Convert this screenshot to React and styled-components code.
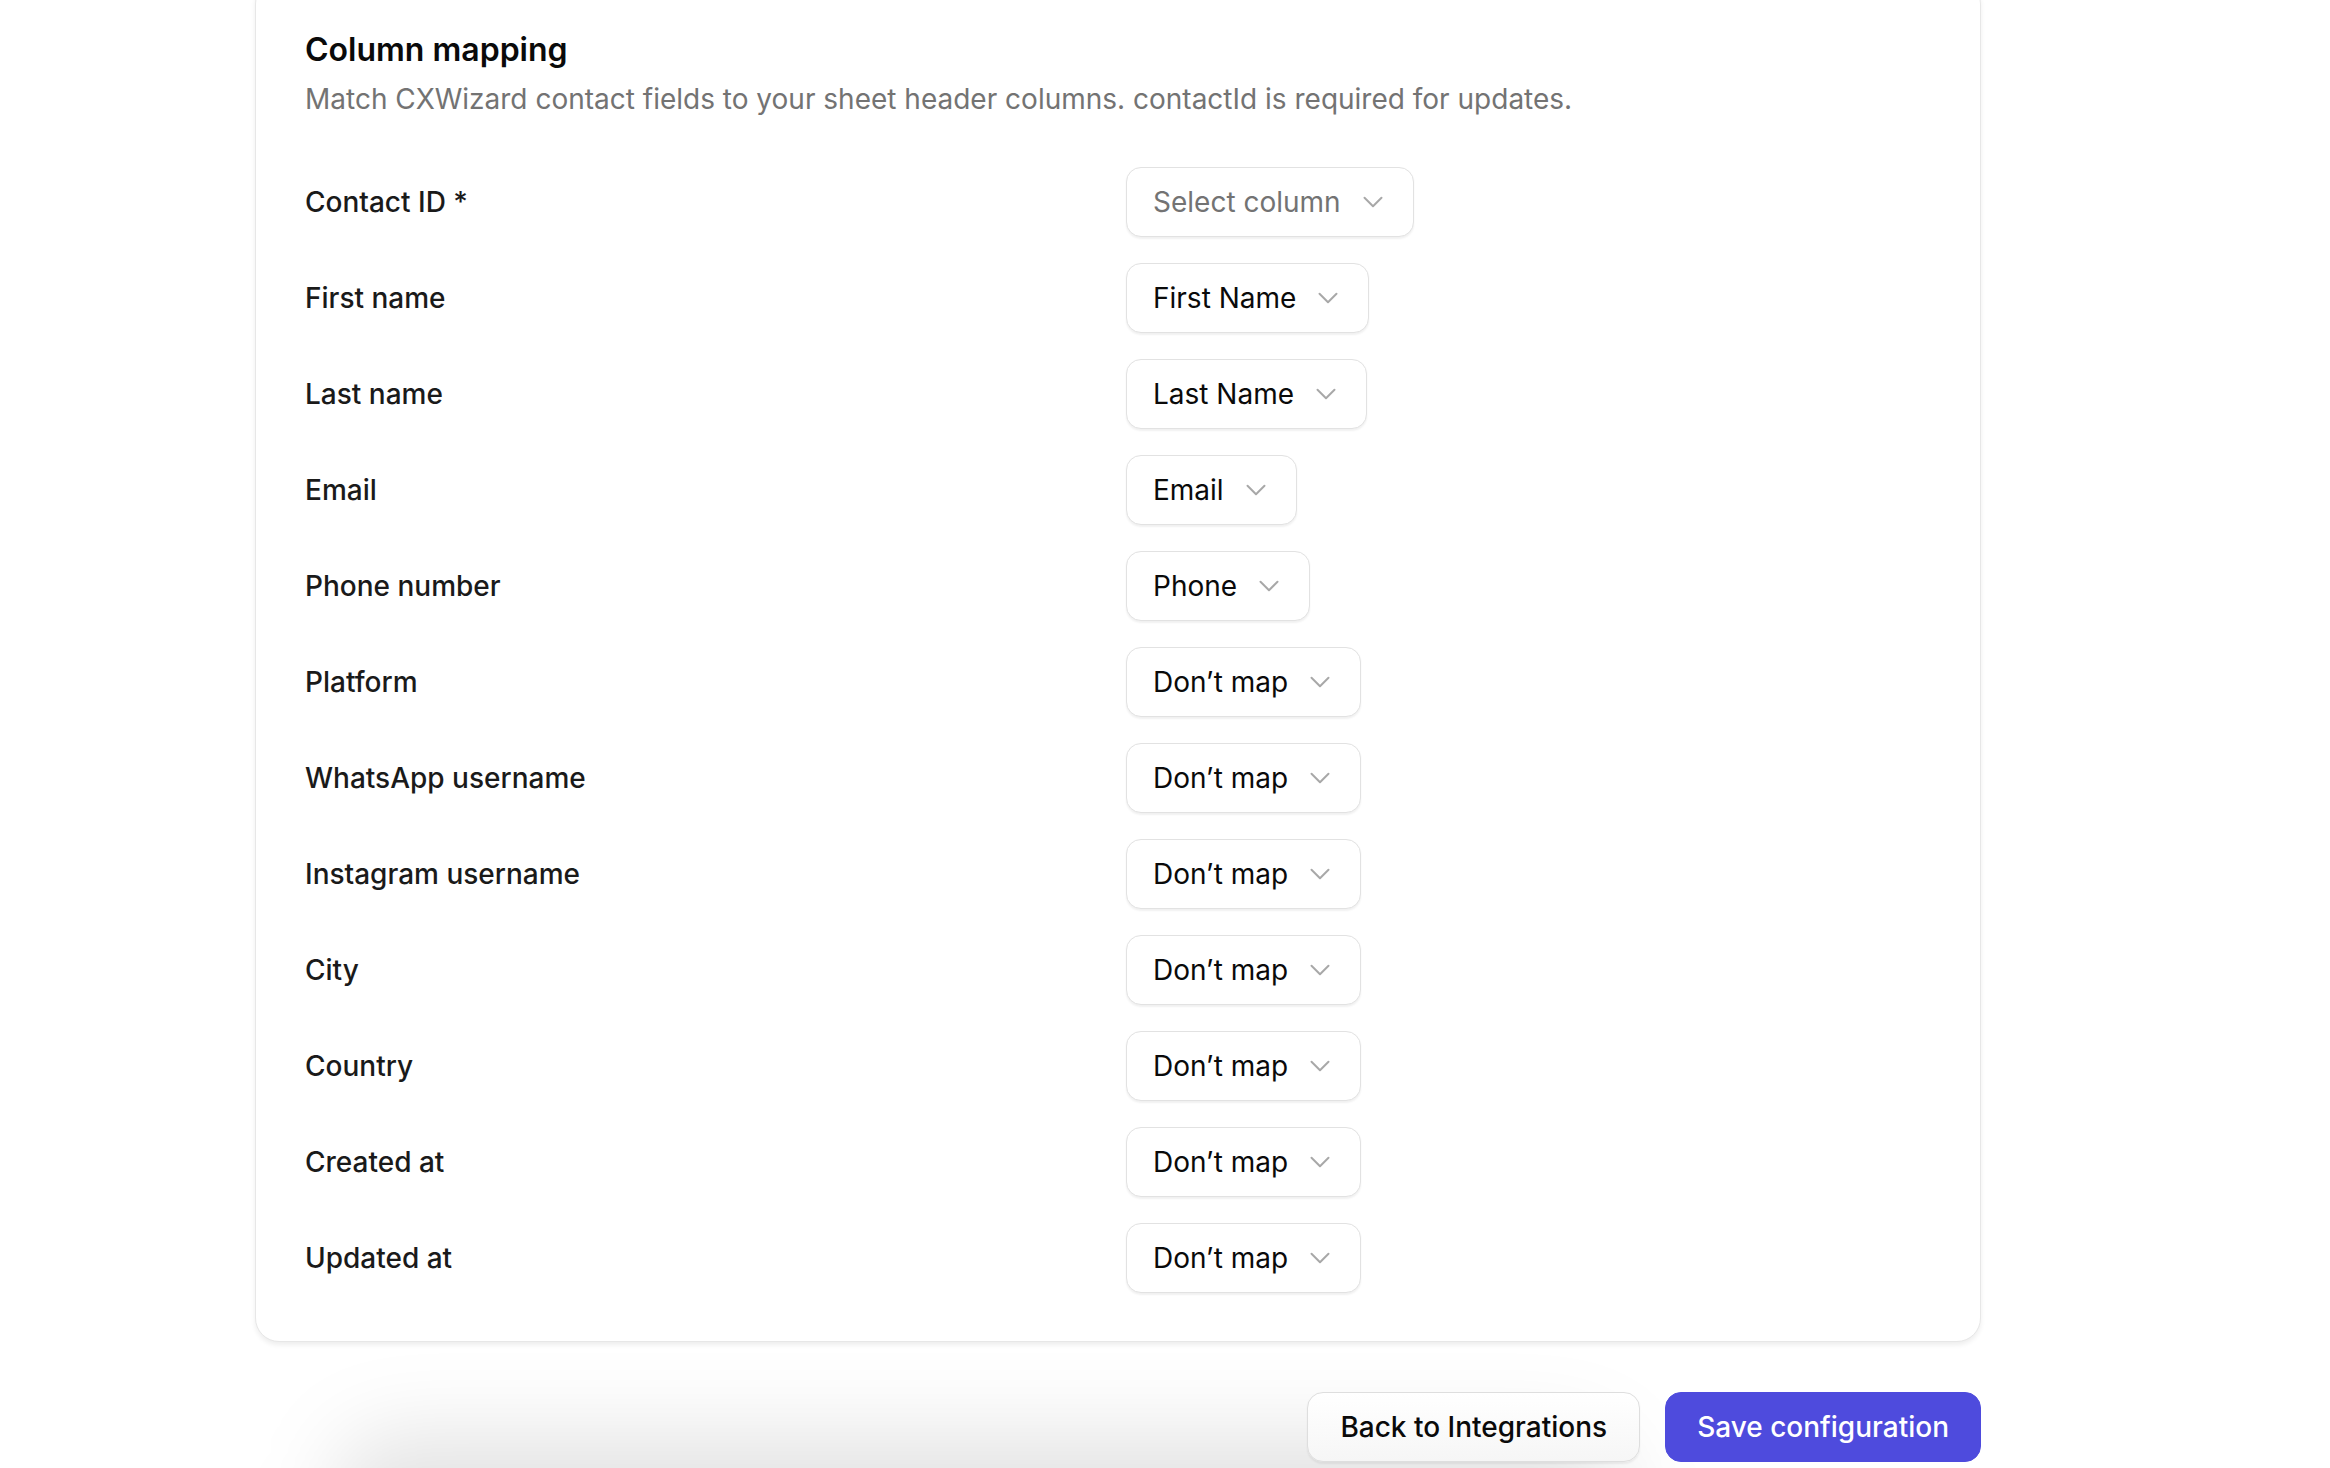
import React from "react";
import styled, { createGlobalStyle } from "styled-components";
import { ChevronDown } from "lucide-react";

const GlobalStyle = createGlobalStyle`
  html, body {
    margin: 0;
    padding: 0;
    background: #ffffff;
  }
  body {
    font-family: Inter, "Noto Sans", "Liberation Sans", sans-serif;
    color: #0a0a0a;
    -webkit-font-smoothing: antialiased;
  }
`;

const Page = styled.div`
  height: 1468px;
  overflow: hidden;
  padding: 0 349px 0 255px;
  box-sizing: border-box;
`;

const Card = styled.section`
  margin-top: -20px;
  background: #ffffff;
  border: 1.5px solid #e7e7e7;
  border-radius: 24px;
  box-shadow: 0 3px 5px rgba(0, 0, 0, 0.07);
  padding: 48px 49px 48px 49px;
`;

const Title = styled.h2`
  margin: 0;
  font-size: 32px;
  line-height: 42px;
  font-weight: 600;
  color: #0a0a0a;
`;

const Subtitle = styled.p`
  margin: 8px 0 0;
  font-size: 28px;
  line-height: 40px;
  color: #737373;
`;

const Grid = styled.div`
  display: grid;
  grid-template-columns: 1fr 1fr;
  column-gap: 16px;
  row-gap: 26px;
  margin-top: 48px;
  align-items: center;
`;

const Label = styled.div`
  font-size: 28px;
  font-weight: 500;
  color: #1a1a1a;
`;

const SelectCell = styled.div`
  display: flex;
`;

const SelectButton = styled.button`
  display: inline-flex;
  align-items: center;
  gap: 15px;
  height: 70px;
  padding: 0 23px 0 26px;
  box-sizing: border-box;
  background: #ffffff;
  border: 1.5px solid #e2e2e2;
  border-radius: 15px;
  box-shadow: 0 1.5px 2px rgba(0, 0, 0, 0.06);
  font-family: inherit;
  font-size: 28px;
  color: ${(p) => (p.$placeholder ? "#737373" : "#0a0a0a")};
  cursor: pointer;

  svg {
    color: #a8a8a8;
    flex-shrink: 0;
  }
`;

const Footer = styled.div`
  position: relative;
  display: flex;
  justify-content: flex-end;
  gap: 25px;
  margin-top: 50px;

  &::before {
    content: "";
    position: absolute;
    left: 80px;
    right: 360px;
    top: 42px;
    height: 220px;
    background: rgba(0, 0, 0, 0.11);
    filter: blur(42px);
    border-radius: 60px;
    z-index: 0;
  }
`;

const Button = styled.button`
  position: relative;
  z-index: 1;
  height: 70px;
  padding: 0 ${(p) => (p.$primary ? "31px" : "32px")};
  border-radius: 16px;
  font-family: inherit;
  font-size: 28px;
  font-weight: 500;
  cursor: pointer;
  border: 1.5px solid ${(p) => (p.$primary ? "#4e4bdd" : "#dedede")};
  background: ${(p) =>
    p.$primary ? "#4e4bdd" : "linear-gradient(#ffffff, #f6f6f6)"};
  color: ${(p) => (p.$primary ? "#ffffff" : "#0a0a0a")};
  box-shadow: ${(p) =>
    p.$primary ? "none" : "0 1.5px 2px rgba(0, 0, 0, 0.06)"};
`;

const rows = [
  { label: "Contact ID *", value: null },
  { label: "First name", value: "First Name" },
  { label: "Last name", value: "Last Name" },
  { label: "Email", value: "Email" },
  { label: "Phone number", value: "Phone" },
  { label: "Platform", value: "Don’t map" },
  { label: "WhatsApp username", value: "Don’t map" },
  { label: "Instagram username", value: "Don’t map" },
  { label: "City", value: "Don’t map" },
  { label: "Country", value: "Don’t map" },
  { label: "Created at", value: "Don’t map" },
  { label: "Updated at", value: "Don’t map" },
];

const App = () => {
  return (
    <Page>
      <GlobalStyle />
      <Card>
        <Title>Column mapping</Title>
        <Subtitle>
          Match CXWizard contact fields to your sheet header columns. contactId
          is required for updates.
        </Subtitle>
        <Grid>
          {rows.map((row) => (
            <React.Fragment key={row.label}>
              <Label>{row.label}</Label>
              <SelectCell>
                <SelectButton type="button" $placeholder={!row.value}>
                  {row.value || "Select column"}
                  <ChevronDown size={34} strokeWidth={1.4} />
                </SelectButton>
              </SelectCell>
            </React.Fragment>
          ))}
        </Grid>
      </Card>
      <Footer>
        <Button type="button">Back to Integrations</Button>
        <Button type="button" $primary>
          Save configuration
        </Button>
      </Footer>
    </Page>
  );
};

export default App;
